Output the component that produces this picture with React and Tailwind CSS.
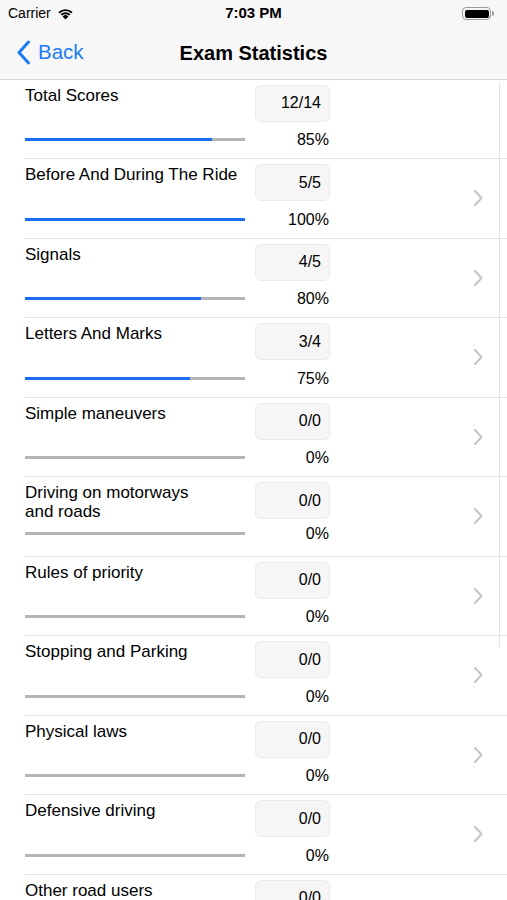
const rows = [
  { label: ["Total Scores"], score: "12/14", pct: 85, chevron: false },
  { label: ["Before And During The Ride"], score: "5/5", pct: 100 },
  { label: ["Signals"], score: "4/5", pct: 80 },
  { label: ["Letters And Marks"], score: "3/4", pct: 75 },
  { label: ["Simple maneuvers"], score: "0/0", pct: 0 },
  { label: ["Driving on motorways", "and roads"], score: "0/0", pct: 0 },
  { label: ["Rules of priority"], score: "0/0", pct: 0 },
  { label: ["Stopping and Parking"], score: "0/0", pct: 0 },
  { label: ["Physical laws"], score: "0/0", pct: 0 },
  { label: ["Defensive driving"], score: "0/0", pct: 0 },
  { label: ["Other road users"], score: "0/0", pct: 0 },
];

function StatusBar() {
  return (
    <div className="h-[27px] bg-[#f7f7f7] flex items-center px-[8px] relative text-black">
      <div className="flex items-center gap-[6px] text-[14px]">
        <span>Carrier</span>
        <svg width="17" height="12" viewBox="0 0 17 12">
          <path d="M8.5 11.5 L5.6 8.4 A4.2 4.2 0 0 1 11.4 8.4 Z" fill="#000" />
          <path d="M3.6 6.3 A7 7 0 0 1 13.4 6.3 L12.1 7.6 A5.2 5.2 0 0 0 4.9 7.6 Z" fill="#000" />
          <path d="M1.4 4.1 A10 10 0 0 1 15.6 4.1 L14.3 5.4 A8.2 8.2 0 0 0 2.7 5.4 Z" fill="#000" />
        </svg>
      </div>
      <div className="absolute left-0 right-0 text-center text-[15px] font-bold pointer-events-none">7:03 PM</div>
      <div className="ml-auto mr-[5px] flex items-center">
        <div className="w-[29px] h-[13px] rounded-[4px] border border-[#9a9a9a] p-[1.5px]">
          <div className="w-full h-full rounded-[2px] bg-black" />
        </div>
        <div className="w-[2px] h-[5px] bg-[#9a9a9a] rounded-r-sm ml-[1px]" />
      </div>
    </div>
  );
}

function NavBar() {
  return (
    <div className="h-[52.5px] bg-[#f7f7f7] border-b border-[#d6d6d6] flex items-center relative">
      <div className="flex items-center pl-[16px] text-[#1a7cf5] text-[20.5px] gap-[7px]">
        <svg width="15" height="25" viewBox="0 0 15 25">
          <path d="M12.5 2 L3 12.5 L12.5 23" fill="none" stroke="#1a7cf5" strokeWidth="3" strokeLinecap="round" strokeLinejoin="round" />
        </svg>
        <span>Back</span>
      </div>
      <div className="absolute left-0 right-0 text-center text-[20px] font-bold text-black pointer-events-none">
        Exam Statistics
      </div>
    </div>
  );
}

function Row({ label, score, pct, chevron = true }) {
  const twoLine = label.length > 1;
  return (
    <div className="h-[79.5px] ml-[25px] border-b border-[#e4e4e4] flex">
      <div className="w-[220px] flex flex-col">
        <div className="pt-[6px] text-[17px] leading-[19px] text-black">
          {label.map((l) => (
            <div key={l}>{l}</div>
          ))}
        </div>
        <div className={"mt-auto h-[3px] bg-[#b5b5b5] " + (twoLine ? "mb-[21px]" : "mb-[17px]")}>
          <div className="h-full bg-[#1c6cf0]" style={{ width: pct + "%" }} />
        </div>
      </div>
      <div className="ml-[10px] w-[75px] flex flex-col">
        <div className="mt-[5px] h-[37px] rounded-[6px] bg-[#f6f6f6] border border-[#ebebeb] flex items-center justify-end pr-[8px] text-[16px] text-black">
          {score}
        </div>
        <div className={"mt-auto pr-[1px] text-right text-[16px] leading-[18px] text-black " + (twoLine ? "mb-[13px]" : "mb-[9px]")}>
          {pct}%
        </div>
      </div>
      {chevron && (
        <div className="ml-auto mr-[24px] flex items-center">
          <svg width="9" height="16" viewBox="0 0 9 16">
            <path d="M1 1 L7.5 8 L1 15" fill="none" stroke="#c4c4c9" strokeWidth="2" strokeLinecap="round" strokeLinejoin="round" />
          </svg>
        </div>
      )}
    </div>
  );
}

export default function App() {
  return (
    <div className="w-[507px] h-[900px] overflow-hidden bg-white relative font-['Liberation_Sans',Arial,sans-serif]">
      <StatusBar />
      <NavBar />
      <div>
        {rows.map((r) => (
          <Row key={r.label.join(" ")} {...r} />
        ))}
      </div>
      {/* scroll indicator line */}
      <div className="absolute left-[499px] top-[83px] h-[564px] w-px bg-[#e2e2e2]" />
    </div>
  );
}
